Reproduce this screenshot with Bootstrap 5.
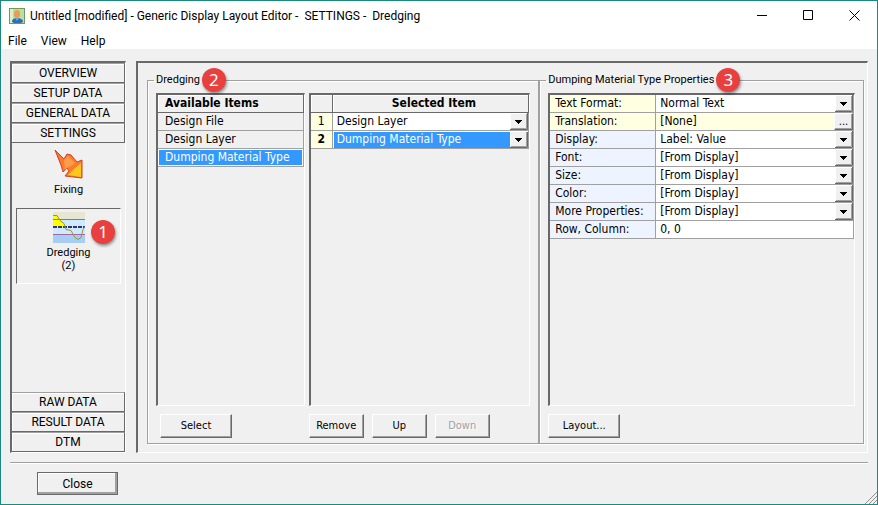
<!DOCTYPE html>
<html lang="en">
<head>
<meta charset="utf-8">
<meta name="viewport" content="width=device-width, initial-scale=1">
<title>Generic Display Layout Editor</title>
<link rel="stylesheet" href="https://cdn.jsdelivr.net/npm/bootstrap@5.3.0/dist/css/bootstrap.min.css">
<style>
:root { --face:#f0f0f0; --shade:#696969; --mid:#a0a0a0; --blue:#3399ff; --ui:"DejaVu Sans Condensed","Noto Sans",sans-serif; }
body { font:12px/18px var(--ui); color:#000; background:var(--face); }
button, input, select { font:inherit; color:inherit; border-radius:0; }
.app { border:1px solid #1a8a7d; }
.app header { font-family:Roboto,sans-serif; }
.title-row { height:29px; }
.title-text { white-space:pre; margin-left:5px; }
.win-btn { width:46px; height:29px; border:0; background:none; padding:0 0 2px; }
.menu-link { color:#000; text-decoration:none; }
.menu-row { height:19px; line-height:22px; gap:14px; padding-left:7px; }
.work { padding:12px 9px 9px; gap:10px; }
.sunken, .list { border:solid; border-width:2px 1px 1px 2px; border-color:var(--shade) #fff #fff var(--shade); }
.side { flex:0 0 116px; font-family:Roboto,sans-serif; }
.side-tab { height:20px; line-height:17px; font-size:12px; padding:0; border:1px solid var(--shade); border-width:1px 1px 1px 0; border-top-color:var(--mid); background:var(--face); box-shadow:inset 1px 1px #fff; }
.side-item { margin:0 4px; border:1px solid transparent; background:none; padding:5px 0 0; font-size:11px; line-height:13px; display:flex; flex-direction:column; align-items:center; }
.side-item svg { margin-bottom:3px; }
.side-item.fixing { height:65px; }
.side-item.chosen { height:76px; border-color:var(--shade) #fff #fff var(--shade); padding-top:3px; }
.main-pane { padding:8px 3px 8px 9px; min-width:0; }
.group { border:1px solid var(--mid); margin:0; padding:4px 8px 5px 8px; min-width:0; box-shadow:1px 1px #fff, inset 1px 1px #fff; }
.group.one { flex:394 1 0; }
.group.two { flex:323 1 0; }
.group legend { float:none; width:auto; margin:0 0 0 -2px; padding:0 20px 0 2px; font-size:11px; line-height:18px; position:relative; font-family:Roboto,sans-serif; }
.step { width:24px; height:24px; border-radius:50%; background:#e8403f; color:#fff; font:17px/24px "Noto Sans",sans-serif; text-align:center; box-shadow:1px 2px 3px #0006; position:absolute; }
.group legend .step { right:-6px; top:-3px; }
.side-item .step { right:5px; top:11px; }
.cols { gap:4px; }
.col-a { flex:149 1 0; min-width:0; }
.col-b { flex:222 1 0; min-width:0; }
.grid-table { width:100%; border-collapse:separate; border-spacing:0; table-layout:fixed; }
.grid-table th, .grid-table td { height:18px; line-height:17px; padding:0 0 0 7px; border-bottom:1px solid var(--mid); border-right:1px solid var(--mid); white-space:nowrap; font-weight:400; overflow:hidden; }
.grid-table thead th { font-weight:700; border-color:var(--shade); box-shadow:inset 1px 1px #fff; }
.props.grid-table th { padding-left:5px; }
.grid-table .idx { background:#ffffe1; text-align:center; padding:0; }
.grid-table .warm { background:#ffffe1; }
.grid-table .cool { background:#eef4ff; }
.grid-table td.val { padding:0; background:#fff; }
.grid-table td.val.warm { background:#ffffe1; }
.grid-table td.picked { background:var(--blue); color:#fff; box-shadow:inset 0 0 0 1px #fff; }
.field { display:block; width:100%; height:17px; line-height:17px; padding:0 0 0 4px; border:0; background:transparent; appearance:none; outline:0; min-width:0; }
select.field { background:url("data:image/svg+xml,%3Csvg xmlns='http://www.w3.org/2000/svg' width='18' height='17'%3E%3Cpath fill='%23f0f0f0' d='M0 0h18v17H0z'/%3E%3Cpath d='M.5 17V.5H18' stroke='%23fff' fill='none'/%3E%3Cpath d='M0 16.5h17.5V0' stroke='%23696969' fill='none'/%3E%3Cpath d='M1 15.500h15.500V1' stroke='%23a0a0a0' fill='none'/%3E%3Cpath d='M5 7h7v1h-1v1h-1v1H9v1H8v-1H7V9H6V8H5z'/%3E%3C/svg%3E") right center no-repeat; }
select.field.current { background-color:var(--blue); color:#fff; box-shadow:inset 1px 1px #fff; }
.push { height:24px; line-height:20px; padding:0; background:var(--face); border:1px solid; border-color:#fff var(--shade) var(--shade) #fff; box-shadow:inset -1px -1px var(--mid); font-size:11px; }
.push:disabled { color:var(--mid); text-shadow:1px 1px #fff; }
.push.wide { width:72px; }
.push.slim { width:55px; }
.push.more { width:19px; height:17px; line-height:10px; flex-shrink:0; }
.push.closer { width:81px; height:23px; border-color:var(--shade); box-shadow:inset -2px -2px var(--mid), inset 1px 1px #fff; font-family:Roboto,sans-serif; font-size:12px; }
.actions { padding-top:8px; gap:8px; }
.foot { height:42px; margin:0 9px; border-top:1px solid var(--mid); box-shadow:inset 0 1px #fff; padding:9px 0 0 27px; }
.grip { position:absolute; right:0; bottom:0; }
</style>
<script src="https://cdn.jsdelivr.net/npm/bootstrap@5.3.0/dist/js/bootstrap.bundle.min.js"></script>
</head>
<body>
<div class="app d-flex flex-column vh-100 position-relative">
  <header class="bg-white">
    <div class="title-row d-flex align-items-center">
      <svg class="ms-2 flex-shrink-0" width="16" height="16"><path fill="#74965f" d="M0 0h16v16H0z"/><path fill="#b9dfa4" d="M1 1h14v14H1z"/><path fill="#d8efc8" d="M1 1h3v14H1z"/><path fill="#2f6fb0" d="M3 14c0-3 2-4 5-4s6 1 6 4l-2 1H5z"/><path fill="#6ea6d8" d="M6 10h4l-2 3z"/><ellipse cx="8" cy="6" rx="3" ry="4" fill="#ec9a55"/></svg>
      <span class="title-text flex-grow-1">Untitled [modified] - Generic Display Layout Editor -  SETTINGS -  Dredging</span>
      <button class="win-btn" aria-label="Minimize"><svg width="11" height="11"><path d="M0 5.500h10" stroke="#000"/></svg></button>
      <button class="win-btn" aria-label="Maximize"><svg width="11" height="11"><path d="M.5.5h9v9h-9z" fill="none" stroke="#000"/></svg></button>
      <button class="win-btn" aria-label="Close window"><svg width="11" height="11"><path d="M.5.5l10 10m0-10l-10 10" stroke="#000"/></svg></button>
    </div>
    <nav class="menu-row d-flex"><a class="menu-link" href="#">File</a><a class="menu-link" href="#">View</a><a class="menu-link" href="#">Help</a></nav>
  </header>

  <div class="work d-flex flex-grow-1">
    <aside class="side sunken d-flex flex-column">
      <button class="side-tab">OVERVIEW</button>
      <button class="side-tab">SETUP DATA</button>
      <button class="side-tab">GENERAL DATA</button>
      <button class="side-tab">SETTINGS</button>
      <button class="side-item fixing">
        <svg width="30" height="31" viewBox="0 0 30 31"><path d="M1 1l4 4 5 5 3-5 4 1 6 7 5-2v18l-17-2 4-5-2-3-4 4-2-7z" fill="#fa7a2e" stroke="#cf4326"/><path d="M10 11l4-4 7 7-4 3-3 1-3 3z" fill="#ff9c4a"/><path d="M27 14v14l-13-2 5-5z" fill="#ffc61c"/></svg>
        <span>Fixing</span>
      </button>
      <button class="side-item chosen position-relative">
        <svg width="32" height="31"><path fill="#e6e6d2" d="M0 0h32v8H0z"/><path fill="#cdeaff" d="M0 7h32v15H0z"/><path fill="#a6cdf3" d="M0 22h32v9H0z"/><path fill="#ff0" d="M0 3h4l3 5 4 3 2 4H0z"/><path stroke="#a565a5" d="M0 7.500h32M0 22.500h32"/><path stroke="#33337a" stroke-width="2" stroke-dasharray="4 1" d="M0 15h32"/><path fill="none" stroke="#99992f" d="M0 3.500h4l3 5 4 3 2 6 5 1 4 7 3 2 3-2 2-8 2-3"/></svg>
        <span>Dredging<br>(2)</span>
        <span class="step">1</span>
      </button>
      <button class="side-tab mt-auto">RAW DATA</button>
      <button class="side-tab">RESULT DATA</button>
      <button class="side-tab">DTM</button>
    </aside>

    <main class="main-pane sunken d-flex flex-grow-1">
      <fieldset class="group one d-flex flex-column">
        <legend>Dredging<span class="step">2</span></legend>
        <div class="cols d-flex flex-grow-1">
          <div class="col-a d-flex flex-column">
            <div class="list flex-grow-1">
              <table class="grid-table">
                <thead><tr><th>Available Items</th></tr></thead>
                <tbody><tr><td>Design File</td></tr><tr><td>Design Layer</td></tr><tr><td class="picked">Dumping Material Type</td></tr></tbody>
              </table>
            </div>
            <div class="actions d-flex ps-1"><button class="push wide">Select</button></div>
          </div>
          <div class="col-b d-flex flex-column">
            <div class="list flex-grow-1">
              <table class="grid-table">
                <colgroup><col style="width:22px"><col></colgroup>
                <thead><tr><th></th><th class="text-center">Selected Item</th></tr></thead>
                <tbody>
                  <tr><td class="idx">1</td><td class="val"><select class="field" aria-label="Selected item 1"><option>Design Layer</option></select></td></tr>
                  <tr><td class="idx fw-bold">2</td><td class="val"><select class="field current" aria-label="Selected item 2"><option>Dumping Material Type</option></select></td></tr>
                </tbody>
              </table>
            </div>
            <div class="actions d-flex"><button class="push slim">Remove</button><button class="push slim">Up</button><button class="push slim" disabled>Down</button></div>
          </div>
        </div>
      </fieldset>
      <fieldset class="group two d-flex flex-column">
        <legend>Dumping Material Type Properties<span class="step">3</span></legend>
        <div class="list flex-grow-1">
          <table class="grid-table props">
            <colgroup><col style="width:106px"><col></colgroup>
            <tbody>
              <tr><th class="warm"><label for="p1">Text Format:</label></th><td class="val"><select id="p1" class="field"><option>Normal Text</option></select></td></tr>
              <tr><th class="warm"><label for="p2">Translation:</label></th><td class="val warm"><div class="d-flex"><input id="p2" class="field" value="[None]"><button class="push more" aria-label="Choose translation">...</button></div></td></tr>
              <tr><th class="cool"><label for="p3">Display:</label></th><td class="val"><select id="p3" class="field"><option>Label: Value</option></select></td></tr>
              <tr><th class="cool"><label for="p4">Font:</label></th><td class="val"><select id="p4" class="field"><option>[From Display]</option></select></td></tr>
              <tr><th class="cool"><label for="p5">Size:</label></th><td class="val"><select id="p5" class="field"><option>[From Display]</option></select></td></tr>
              <tr><th class="cool"><label for="p6">Color:</label></th><td class="val"><select id="p6" class="field"><option>[From Display]</option></select></td></tr>
              <tr><th class="cool"><label for="p7">More Properties:</label></th><td class="val"><select id="p7" class="field"><option>[From Display]</option></select></td></tr>
              <tr><th class="cool"><label for="p8">Row, Column:</label></th><td class="val"><input id="p8" class="field" value="0, 0"></td></tr>
            </tbody>
          </table>
        </div>
        <div class="actions d-flex"><button class="push wide">Layout...</button></div>
      </fieldset>
    </main>
  </div>
  <footer class="foot"><button class="push closer">Close</button></footer>
  <svg class="grip" width="12" height="12"><path d="M0 12L12 0M4 12l8-8M8 12l4-4" stroke="#909090"/></svg>
</div>
</body>
</html>
